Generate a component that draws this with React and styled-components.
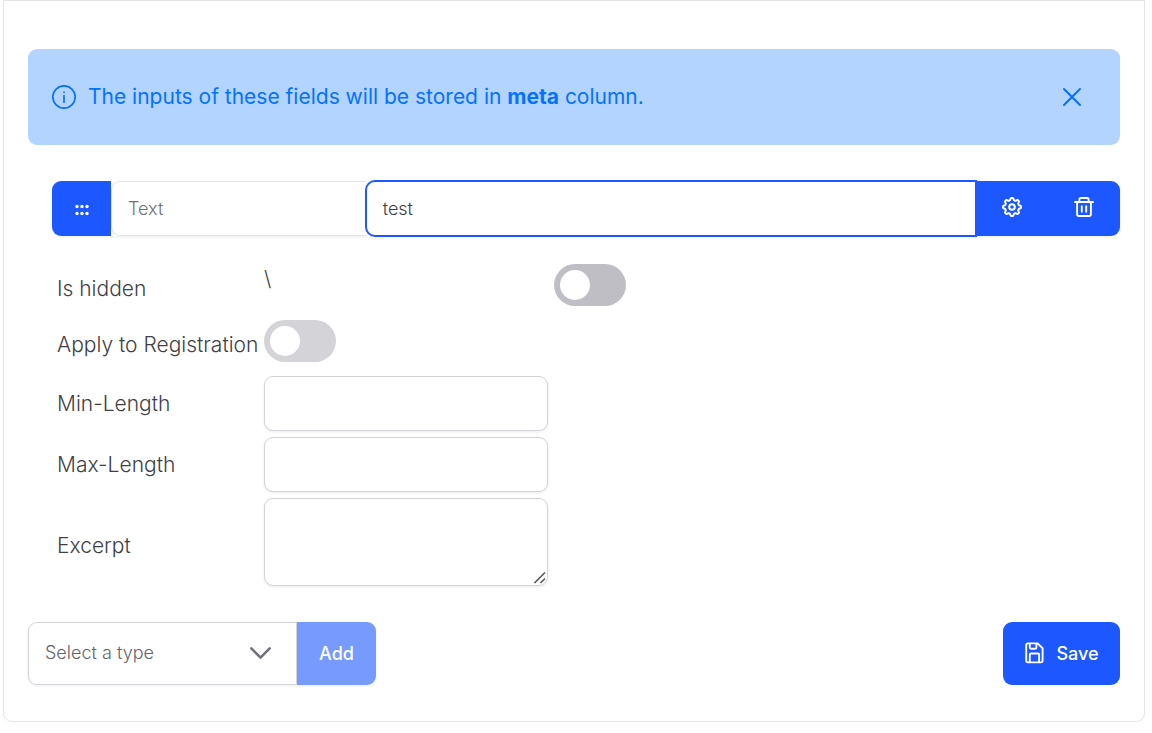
import React, { useState } from "react";
import styled, { createGlobalStyle, css } from "styled-components";

const GlobalStyle = createGlobalStyle`
  *, *::before, *::after { box-sizing: border-box; }
  body {
    margin: 0;
    background: #fff;
    color: #3f3f46;
    font-family: Inter, "Liberation Sans", sans-serif;
    font-size: 21px;
    line-height: 30px;
    font-weight: 300;
  }
  button, input, select, textarea { font: inherit; color: inherit; margin: 0; }
`;

const primary = "#1c57ff";
const fieldShadow = "0 1px 3px rgba(18, 18, 23, 0.08)";

const Page = styled.main`
  padding: 0 7px 11px 3px;
`;

const Card = styled.form`
  border: 1px solid #e4e4e7;
  border-radius: 0 0 9px 9px;
  padding: 48px 24px 36px;
`;

const Message = styled.div`
  display: flex;
  align-items: center;
  gap: 12px;
  min-height: 96px;
  padding: 0 24px;
  border-radius: 9px;
  background: #b3d4ff;
  color: #0572ff;
`;

const MessageText = styled.p`
  flex: 1;
  margin: 0;
  font-weight: 400;
  strong { font-weight: 700; }
`;

const CloseButton = styled.button`
  display: grid;
  place-items: center;
  width: 48px;
  height: 48px;
  padding: 0;
  border: 0;
  border-radius: 50%;
  background: transparent;
  cursor: pointer;
`;

const FieldItem = styled.section`
  padding-left: 24px;
`;

const FieldBar = styled.div`
  display: flex;
  height: 55px;
  margin-top: 36px;
  border-radius: 9px;
  box-shadow: ${fieldShadow};
`;

const BarButton = styled.button`
  display: grid;
  place-items: center;
  flex: none;
  width: ${(p) => p.$width}px;
  padding: ${(p) => (p.$raised ? "0 0 3px" : "3px 0 0")};
  border: 0;
  border-radius: ${(p) => p.$radius || 0};
  background: ${primary};
  color: #fff;
  cursor: pointer;
`;

const BarInput = styled.input`
  flex: ${(p) => p.$grow} 1 0;
  min-width: 0;
  padding: 0 16px;
  border: 1px solid #e4e4e7;
  border-radius: 9px 0 0 9px;
  background: #fff;
  font-size: 18px;
  outline: 0;
  &:disabled { color: #71717a; border-right: 0; }
  ${(p) =>
    p.$active &&
    css`
      position: relative;
      border-color: ${primary};
      box-shadow: 0 0 0 1px ${primary};
    `}
`;

const Settings = styled.div`
  display: grid;
  grid-template-columns: 201px 284px auto;
  justify-content: start;
  align-items: start;
  gap: 6px;
  margin-top: 28px;
  padding-left: 5px;
`;

const SettingLabel = styled.label`
  grid-column: 1;
  align-self: center;
  white-space: nowrap;
`;

const SwitchCell = styled.span`
  height: 50px;
  display: flex;
  align-items: flex-start;
`;

const Switch = styled.input`
  appearance: none;
  width: 72px;
  height: 42px;
  padding: 6px;
  border-radius: 21px;
  background: #c0bec5;
  cursor: pointer;
  &::before {
    content: "";
    display: block;
    width: 30px;
    height: 30px;
    border-radius: 50%;
    background: #fff;
  }
  &:disabled { background: #d4d3d8; cursor: default; }
  &:checked { background: ${primary}; }
  &:checked::before { margin-left: 30px; }
`;

const fieldBox = css`
  display: block;
  width: 100%;
  padding: 12px 16px;
  border: 1px solid #d4d4d8;
  border-radius: 9px;
  background: #fff;
  box-shadow: ${fieldShadow};
`;

const TextBox = styled.input`
  ${fieldBox}
  height: 55px;
`;

const TextAreaCell = styled.div`
  padding-bottom: 8px;
`;

const resizeGrip = encodeURIComponent(
  '<svg xmlns="http://www.w3.org/2000/svg" width="15" height="15"><path d="M2.5 13 13 2.5M8.5 13 13 8.5" stroke="#555" stroke-width="1.6"/></svg>'
);

const TextArea = styled.textarea`
  ${fieldBox}
  height: 88px;
  resize: both;
  &::-webkit-resizer {
    background: url("data:image/svg+xml,${resizeGrip}") no-repeat right bottom;
  }
`;

const Footer = styled.footer`
  display: flex;
  justify-content: space-between;
  margin-top: 28px;
  height: 63px;
`;

const AddGroup = styled.div`
  display: flex;
  border-radius: 9px;
  box-shadow: ${fieldShadow};
`;

const SelectWrap = styled.div`
  position: relative;
  width: 269px;
  svg {
    position: absolute;
    right: 24px;
    top: 20px;
    pointer-events: none;
    color: #71717a;
  }
`;

const Select = styled.select`
  appearance: none;
  width: 100%;
  height: 100%;
  padding: 0 60px 2px 16px;
  border: 1px solid #d4d4d8;
  border-radius: 9px 0 0 9px;
  background: #fff;
  color: #63636b;
  font-size: 18px;
`;

const ActionButton = styled.button`
  display: flex;
  align-items: center;
  justify-content: center;
  gap: 12px;
  width: ${(p) => p.$width}px;
  padding: 0;
  border: 0;
  border-radius: ${(p) => p.$radius};
  background: ${primary};
  color: #fff;
  font-size: 18px;
  font-weight: 500;
  cursor: pointer;
  &:disabled { background: #779aff; cursor: default; }
`;

const Svg = ({ size = 24, height = size, stroke = 2, children }) => (
  <svg
    width={size}
    height={height}
    viewBox={`0 0 ${size} ${height}`}
    fill="none"
    stroke="currentColor"
    strokeWidth={stroke}
    strokeLinecap="round"
    strokeLinejoin="round"
    aria-hidden="true"
  >
    {children}
  </svg>
);

const InfoIcon = () => (
  <Svg stroke={1.7}>
    <circle cx="12" cy="12" r="11.2" />
    <path d="M12 10.6v6.6M12 7v.3" />
  </Svg>
);

const CloseIcon = () => (
  <Svg size={20}>
    <path d="M2 2 18 18M18 2 2 18" />
  </Svg>
);

const GripIcon = () => (
  <Svg size={14} stroke={0}>
    <g fill="currentColor">
      {[2, 7, 12].map((x) => [3.5, 10.5].map((y) => <circle key={`${x}-${y}`} cx={x} cy={y} r="1.7" />))}
    </g>
  </Svg>
);

const gearOutline =
  Array.from({ length: 96 }, (_, i) => {
    const a = (i / 96) * Math.PI * 2;
    const r = 8 + 1.1 * Math.tanh(1.8 * Math.cos(a * 8));
    return `${i ? "L" : "M"}${(10 + r * Math.sin(a)).toFixed(2)} ${(10 - r * Math.cos(a)).toFixed(2)}`;
  }).join("") + "Z";

const GearIcon = () => (
  <Svg size={20}>
    <path d={gearOutline} />
    <circle cx="10" cy="10" r="2.8" />
  </Svg>
);

const TrashIcon = () => (
  <Svg size={20} stroke={1.9}>
    <path d="M1 5H19M3.1 5V17.2Q3.1 19 5 19H15Q16.9 19 16.9 17.2V5M5.3 5V2.7Q5.3 1 7 1H13Q14.7 1 14.7 2.7V5M7.8 9.3V14.8M12.2 9.3V14.8" />
  </Svg>
);

const SaveIcon = () => (
  <Svg size={20} height={24} stroke={1.9}>
    <path d="M4 1.4H13.6L18.6 6.2V18.6Q18.6 20.4 16.8 20.4H4Q2.2 20.4 2.2 18.6V3.2Q2.2 1.4 4 1.4ZM5.8 1.6V5.6Q5.8 6.7 6.9 6.7H11.3Q12.4 6.7 12.4 5.6V1.6M5.8 20.2V12.6Q5.8 11.5 6.9 11.5H14Q15.1 11.5 15.1 12.6V20.2" />
  </Svg>
);

const ChevronIcon = () => (
  <Svg size={24} stroke={2.6}>
    <path d="M2.3 6.3 11.5 15.6 20.7 6.3" />
  </Svg>
);

export default function App() {
  const [label, setLabel] = useState("test");
  const [open, setOpen] = useState(true);
  return (
    <Page>
      <GlobalStyle />
      <Card onSubmit={(e) => e.preventDefault()}>
        {open && (
          <Message role="status">
            <InfoIcon />
            <MessageText>
              The inputs of these fields will be stored in <strong>meta</strong> column.
            </MessageText>
            <CloseButton type="button" aria-label="Close" onClick={() => setOpen(false)}>
              <CloseIcon />
            </CloseButton>
          </Message>
        )}
        <FieldItem>
          <FieldBar>
            <BarButton type="button" $width={59} $radius="9px 0 0 9px" aria-label="Reorder">
              <GripIcon />
            </BarButton>
            <BarInput $grow={5} aria-label="Field type" value="Text" disabled />
            <BarInput $grow={13} $active aria-label="Field label" value={label} onChange={(e) => setLabel(e.target.value)} />
            <BarButton type="button" $width={72} $raised aria-label="Settings">
              <GearIcon />
            </BarButton>
            <BarButton type="button" $width={72} $raised $radius="0 9px 9px 0" aria-label="Delete">
              <TrashIcon />
            </BarButton>
          </FieldBar>
          <Settings>
            <SettingLabel htmlFor="hidden">Is hidden</SettingLabel>
            <span>\</span>
            <SwitchCell>
              <Switch type="checkbox" role="switch" id="hidden" />
            </SwitchCell>
            <SettingLabel htmlFor="registration">Apply to Registration</SettingLabel>
            <SwitchCell>
              <Switch type="checkbox" role="switch" id="registration" disabled />
            </SwitchCell>
            <SettingLabel htmlFor="min">Min-Length</SettingLabel>
            <TextBox id="min" />
            <SettingLabel htmlFor="max">Max-Length</SettingLabel>
            <TextBox id="max" />
            <SettingLabel htmlFor="excerpt">Excerpt</SettingLabel>
            <TextAreaCell>
              <TextArea id="excerpt" />
            </TextAreaCell>
          </Settings>
        </FieldItem>
        <Footer>
          <AddGroup>
            <SelectWrap>
              <Select aria-label="Field type to add" defaultValue="">
                <option value="">Select a type</option>
              </Select>
              <ChevronIcon />
            </SelectWrap>
            <ActionButton type="button" $width={79} $radius="0 9px 9px 0" disabled>
              Add
            </ActionButton>
          </AddGroup>
          <ActionButton type="submit" $width={117} $radius="9px">
            <SaveIcon />
            Save
          </ActionButton>
        </Footer>
      </Card>
    </Page>
  );
}
